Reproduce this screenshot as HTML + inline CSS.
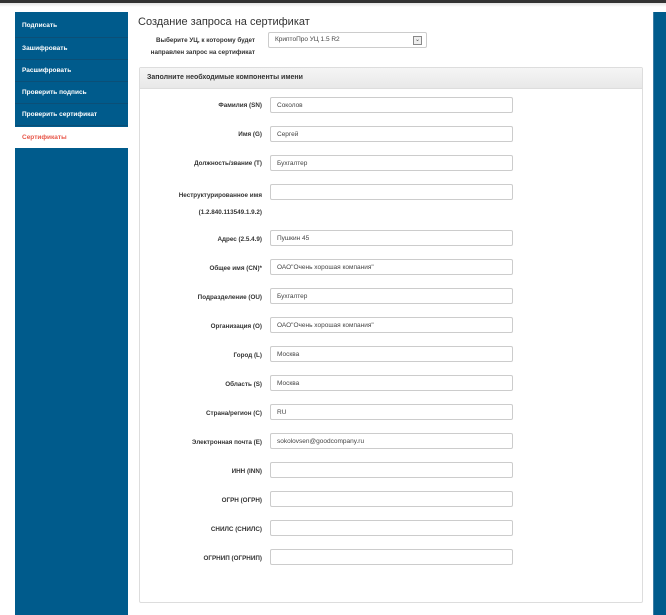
<!DOCTYPE html>
<html><head><meta charset="utf-8"><style>
*{margin:0;padding:0;box-sizing:border-box}
body{width:666px;height:615px;position:relative;background:#fff;font-family:"Liberation Sans","DejaVu Sans",sans-serif;overflow:hidden}
.top{position:absolute;left:0;top:0;width:666px;height:3px;background:#333}
.topsh{position:absolute;left:0;top:3px;width:666px;height:4px;background:linear-gradient(#e4e4e4,#fff)}
.side{position:absolute;left:15px;top:12px;width:113px;height:603px;background:#005b8c}
.it{position:absolute;left:0;width:113px;height:22px;border-bottom:1px solid #0b4f77;color:#fff;font-size:6.5px;font-weight:bold;padding-left:7px;line-height:22px}
.act{background:#fff;color:#e8574a;border:none}
.rbar{position:absolute;left:653px;top:12px;width:13px;height:603px;background:#005b8c;border-left:1px solid #3d7ea5}
h1{position:absolute;left:138px;top:16px;font-size:11px;font-weight:normal;color:#333}
.sl{position:absolute;left:130px;width:125px;text-align:right;font-size:6.3px;font-weight:bold;color:#333}
.sel{position:absolute;left:268px;top:32px;width:159px;height:16px;border:1px solid #ccc;border-radius:2px;font-size:6.5px;color:#444;padding-left:6px;line-height:14px}
.sel b{position:absolute;right:4px;top:3px;width:9px;height:9px;border:1px solid #888;background:#eee;font-size:6px;line-height:7px;text-align:center;font-weight:normal}
.panel{position:absolute;left:139px;top:67px;width:504px;height:536px;border:1px solid #ddd;border-radius:2px}
.ph{height:21px;background:linear-gradient(#f5f5f5,#e8e8e8);border-bottom:1px solid #ddd;font-size:7px;font-weight:bold;color:#333;padding-left:7px;line-height:20px}
.lb{position:absolute;left:140px;width:122px;text-align:right;font-size:6.3px;font-weight:bold;color:#333}
.in{position:absolute;left:270px;width:243px;height:16px;border:1px solid #ccc;border-radius:2px;font-size:6.5px;color:#444;padding:1px 0 0 6px;line-height:14px}
</style></head><body>
<div class="top"></div><div class="topsh"></div>
<div class="side">
<div class="it" style="top:2px;height:24px;line-height:24px">Подписать</div>
<div class="it" style="top:26px">Зашифровать</div>
<div class="it" style="top:48px">Расшифровать</div>
<div class="it" style="top:70px">Проверить подпись</div>
<div class="it" style="top:92px">Проверить сертификат</div>
<div class="it act" style="top:115px;height:21px;line-height:21px">Сертификаты</div>
</div>
<div class="rbar"></div>
<h1>Создание запроса на сертификат</h1>
<div class="sl" style="top:37px">Выберите УЦ, к которому будет</div>
<div class="sl" style="top:49px">направлен запрос на сертификат</div>
<div class="sel">КриптоПро УЦ 1.5 R2<b>&#8964;</b></div>
<div class="panel"><div class="ph">Заполните необходимые компоненты имени</div></div>

<div class="lb" style="top:102px">Фамилия (SN)</div><div class="in" style="top:97px">Соколов</div>
<div class="lb" style="top:131px">Имя (G)</div><div class="in" style="top:126px">Сергей</div>
<div class="lb" style="top:160px">Должность/звание (T)</div><div class="in" style="top:155px">Бухгалтер</div>
<div class="lb" style="top:192px">Неструктурированное имя</div><div class="lb" style="top:209px">(1.2.840.113549.1.9.2)</div><div class="in" style="top:184px"></div>
<div class="lb" style="top:236px">Адрес (2.5.4.9)</div><div class="in" style="top:230px">Пушкин 45</div>
<div class="lb" style="top:265px">Общее имя (CN)*</div><div class="in" style="top:259px">ОАО"Очень хорошая компания"</div>
<div class="lb" style="top:294px">Подразделение (OU)</div><div class="in" style="top:288px">Бухгалтер</div>
<div class="lb" style="top:323px">Организация (O)</div><div class="in" style="top:317px">ОАО"Очень хорошая компания"</div>
<div class="lb" style="top:352px">Город (L)</div><div class="in" style="top:346px">Москва</div>
<div class="lb" style="top:381px">Область (S)</div><div class="in" style="top:375px">Москва</div>
<div class="lb" style="top:410px">Страна/регион (C)</div><div class="in" style="top:404px">RU</div>
<div class="lb" style="top:439px">Электронная почта (E)</div><div class="in" style="top:433px">sokolovsen@goodcompany.ru</div>
<div class="lb" style="top:468px">ИНН (INN)</div><div class="in" style="top:462px"></div>
<div class="lb" style="top:497px">ОГРН (ОГРН)</div><div class="in" style="top:491px"></div>
<div class="lb" style="top:526px">СНИЛС (СНИЛС)</div><div class="in" style="top:520px"></div>
<div class="lb" style="top:555px">ОГРНИП (ОГРНИП)</div><div class="in" style="top:549px"></div>
</body></html>
